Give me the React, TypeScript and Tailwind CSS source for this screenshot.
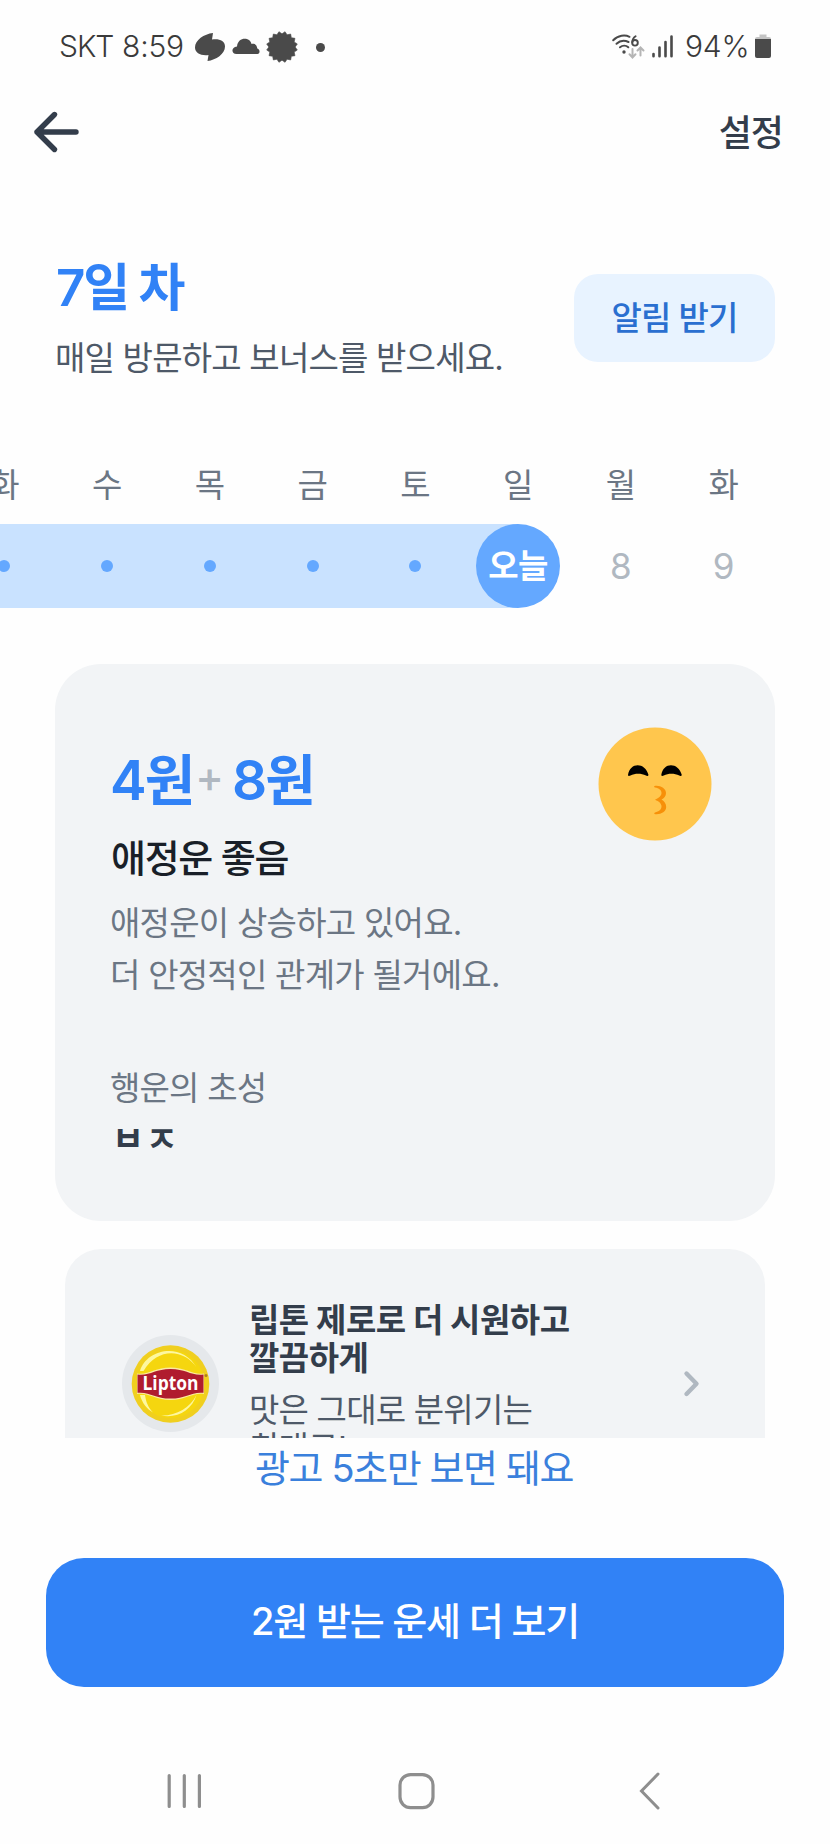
import clsx from 'clsx';

interface Day {
  label: string;
  date: number;
}

const TODAY = 7;

const days: Day[] = [
  { label: '화', date: 2 },
  { label: '수', date: 3 },
  { label: '목', date: 4 },
  { label: '금', date: 5 },
  { label: '토', date: 6 },
  { label: '일', date: 7 },
  { label: '월', date: 8 },
  { label: '화', date: 9 },
];

// 16-pointed burst used by the status bar notification
const burstPoints = Array.from({ length: 32 }, (_, i) => {
  const r = i % 2 === 0 ? 15.6 : 13.2;
  const a = ((i + 1) * Math.PI) / 16;
  return `${(16 + r * Math.cos(a)).toFixed(2)},${(16 + r * Math.sin(a)).toFixed(2)}`;
}).join(' ');

function StatusBar() {
  return (
    <div className="flex h-[94px] items-center justify-between pl-[59px] pr-[59px] text-[30px] font-light text-[#3a3a3a]">
      <div className="flex items-center">
        <span className="w-[63px] pb-0.5 tracking-[-1px]">SKT</span>
        <span className="w-[72px] pb-0.5 tracking-[-0.2px]">8:59</span>
        <svg className="h-8 w-8" viewBox="0 0 32 32" fill="#4a4a4a">
          <path d="M19 2 C10 3 1 9 1 16.5 C1 22 7 25 14.5 24 L13.500 30 C22 29 31 23 31 15.500 C31 9.500 25 7.500 18 8.500 Z" />
        </svg>
        <svg className="ml-[6px] h-8 w-7" viewBox="0 0 28 32" fill="#4a4a4a">
          <path d="M4.500 23 C-1 23 -1 16 5 15.500 C6 5.500 18 6 19.500 13 C23 12.300 25 14.300 25.300 17.500 C28.500 18.500 28 23 25.500 23 Z" />
        </svg>
        <svg className="ml-[6px] h-8 w-8" viewBox="0 0 32 32" fill="#4a4a4a" stroke="#4a4a4a" strokeLinejoin="round">
          <polygon points={burstPoints} strokeWidth="0.6" />
        </svg>
        <span className="ml-[18px] h-[9px] w-[9px] rounded-full bg-[#4a4a4a]" />
      </div>

      <div className="flex items-center">
        <svg className="h-8 w-9" viewBox="0 0 36 32" fill="none" strokeLinecap="round">
          <g stroke="#4a4a4a" strokeWidth="2">
            <path d="M2.200 9.300 C7 4.200 14 3.700 18.500 5.800" />
            <path d="M5.500 12.800 C9 9.500 13.500 9.200 17.500 11" />
            <path d="M9 16.300 C11.500 14.300 15 14.300 17.300 16.300" />
            <circle cx="24" cy="11.800" r="2.800" strokeWidth="1.900" />
            <path d="M21.300 11.500 C21.300 8.500 22.500 6.500 24.600 5.200" strokeWidth="1.900" />
          </g>
          <circle cx="13" cy="21" r="1.700" fill="#4a4a4a" />
          <g stroke="#b5b5b5" strokeWidth="2">
            <path d="M21.500 18 V26 M18.500 23.300 L21.500 26.500 L24.500 23.300" />
            <path d="M29.500 24.500 V17 M26.500 19.500 L29.500 16.500 L32.500 19.500" />
          </g>
        </svg>
        <svg className="ml-1 h-8 w-6" viewBox="0 0 24 32" stroke="#4a4a4a" strokeWidth="2.600" strokeLinecap="round">
          <path d="M2.500 23 V25.200 M8.500 16.500 V25.200 M14.500 11 V25.200 M20.500 5.500 V25.200" />
        </svg>
        <span className="ml-[10px] w-[70px] pb-0.5 tracking-[-0.2px]">94%</span>
        <svg className="h-8 w-4" viewBox="0 0 16 32">
          <path d="M4.500 3.500 H11.500 V6 H14 Q16 6 16 8 H0 Q0 6 2 6 H4.500 Z" fill="#c4c4c4" />
          <path d="M0 8 H16 V25 Q16 27 14 27 H2 Q0 27 0 25 Z" fill="#4a4a4a" />
        </svg>
      </div>
    </div>
  );
}

function WeekStrip() {
  return (
    <div className="mt-[84px] overflow-hidden">
      <div className="-ml-[47px] flex w-[822px]">
        {days.map((day) => (
          <span
            key={day.date}
            className="flex-1 text-center text-[33px] leading-[42px] text-[#6b7684]"
          >
            {day.label}
          </span>
        ))}
      </div>
      <div className="relative mt-[18px] -ml-[47px] flex h-[84px] w-[822px] items-center">
        <div className="absolute inset-y-0 left-0 w-[565px] bg-[#c9e2ff]" />
        {days.map((day) => (
          <div
            key={day.date}
            className={clsx(
              'relative flex flex-1 items-center justify-center',
              day.date > TODAY && 'text-[35px] text-[#b0b8c1]'
            )}
          >
            {day.date < TODAY && <span className="h-3 w-3 rounded-full bg-[#64a8ff]" />}
            {day.date === TODAY && (
              <span className="flex h-[84px] w-[84px] items-center justify-center rounded-full bg-[#64a8ff] pt-0.5 text-[33px] font-bold tracking-[-0.6px] text-white">
                오늘
              </span>
            )}
            {day.date > TODAY && day.date}
          </div>
        ))}
      </div>
    </div>
  );
}

function KissingFace() {
  return (
    <svg className="mt-[-21px] h-[114px] w-[114px]" viewBox="0 0 114 114">
      <circle cx="57" cy="57" r="56.500" fill="#ffc64d" />
      <path d="M30 48 C32 35 47 35 50.500 48 C50 49.500 48.500 49 48 48.500 C43 46 37 46 32.500 48.500 C31 49.300 30 49 30 48 Z" fill="#000" />
      <path d="M63.300 48 C65.300 35 80.300 35 83.800 48 C83.300 49.500 81.800 49 81.300 48.500 C76.300 46 70.300 46 65.800 48.500 C64.300 49.300 63.300 49 63.300 48 Z" fill="#000" />
      <path d="M56.500 59 C62 58 68 61.500 68 66 C68 69.500 66 71.200 63.500 72.500 C66 74 68.200 76.500 68.200 80 C68.200 85 62 88 56.500 87 C56 86 56.500 85.500 57 85.400 C61 84.500 63.500 82.500 63.500 79.500 C63.500 76.500 61 74.500 57 72.800 C61 70.500 63.500 69 63.500 66 C63.500 63 61 61.500 57 60.600 C56 60.300 56 59.300 56.500 59 Z" fill="#f79009" />
    </svg>
  );
}

function FortuneCard() {
  return (
    <section className="mx-[55px] mt-14 flex h-[557px] justify-between rounded-[46px] bg-[#f2f4f6] pt-[86px] pr-[63px] pl-[55px]">
      <div>
        <p className="flex text-[55px] leading-[60px] font-semibold tracking-[-2px] text-[#3182f6]">
          4원<span className="-mt-1 ml-0.5 mr-1 text-[43px] font-medium text-[#b0b8c1]">+</span>
          <span className="ml-1.5">8원</span>
        </p>
        <h2 className="mt-[25px] pl-px text-[38px] leading-[46px] font-medium tracking-[-1.3px] text-[#191f28]">
          애정운 좋음
        </h2>
        <p className="mt-4 text-[33px] leading-[52px] tracking-[-0.75px] text-[#6b7684]">
          애정운이 상승하고 있어요.
          <br />더 안정적인 관계가 될거에요.
        </p>
        <p className="mt-[67px] text-[33px] leading-10 tracking-[-0.8px] text-[#6b7684]">행운의 초성</p>
        <p className="mt-[11px] pl-0.5 text-[35px] leading-10 font-bold tracking-[1.5px] text-[#333d4b]">ㅂㅈ</p>
      </div>
      <div className="-mt-0.5">
        <KissingFace />
      </div>
    </section>
  );
}

function LiptonLogo() {
  return (
    <svg className="mt-[86px] h-[97px] w-[97px]" viewBox="0 0 97 97">
      <circle cx="48.500" cy="48.500" r="48.500" fill="#e5e8eb" />
      <circle cx="48.500" cy="49" r="38.800" fill="#f0cf1f" />
      <circle cx="48.500" cy="49" r="34" fill="#f5d60f" />
      <path d="M18 36 C24 14 60 6 75 33 C62 14 36 12 21.500 36 Z" fill="#fdf7a0" />
      <path d="M18 60 C20 68 25 74 31 77.500 C26 72 24 67 23 60 Z M39 80.500 C55 84 70 75 74.500 60 C68 73 54 81 39 80.500 Z" fill="#fdf7a0" />
      <path d="M15 38.500 C27 40 33 32.500 48.500 32.500 C64 32.500 70 40 82 38.500 V59 C70 57.500 64 65 48.500 65 C33 65 27 57.500 15 59 Z" fill="#fbe9a0" />
      <path d="M15.500 39.500 C28 41 33 34 48.500 34 C64 34 69 41 81.500 39.500 V57.800 C69 56.500 64 63.600 48.500 63.600 C33 63.600 28 56.500 15.500 57.800 Z" fill="#b01c2e" />
      <circle cx="84" cy="40.500" r="1.500" fill="#b0801e" />
      <text
        x="48.500"
        y="55"
        textAnchor="middle"
        textLength="56"
        lengthAdjust="spacingAndGlyphs"
        fill="#fff"
        className="font-['Open_Sans',sans-serif] text-[19px] font-bold"
      >
        Lipton
      </text>
    </svg>
  );
}

function AdCard() {
  return (
    <section className="mx-[65px] mt-7 flex h-[189px] overflow-hidden rounded-t-[36px] bg-[#f2f4f6] pl-[57px]">
      <LiptonLogo />
      <div className="ml-[30px] w-[370px] pt-[52px] text-[33px] leading-[38px] tracking-[-0.8px]">
        <h3 className="font-bold tracking-[-0.5px] text-[#333d4b]">
          립톤 제로로 더 시원하고
          <br />
          깔끔하게
        </h3>
        <p className="mt-3.5 text-[#4e5968]">
          맛은 그대로 분위기는
          <br />
          최대로!
        </p>
      </div>
      <svg className="mt-[120px] ml-[62px] h-[30px] w-5" viewBox="0 0 20 30" fill="none">
        <path
          d="M5.500 4.500 L15.500 14.700 L5.500 25"
          stroke="#b0b8c1"
          strokeWidth="4.400"
          strokeLinecap="round"
          strokeLinejoin="round"
        />
      </svg>
    </section>
  );
}

function NavBar() {
  return (
    <nav className="mt-[51px] flex h-[106px] items-center pl-[164px]">
      <svg className="h-10 w-10" viewBox="0 0 40 40" stroke="#8e8e8e" strokeWidth="3.200" strokeLinecap="round">
        <path d="M5.200 4.500 V35.500 M20.300 4.500 V35.500 M35.400 4.500 V35.500" />
      </svg>
      <svg className="ml-[192px] h-10 w-10" viewBox="0 0 40 40" fill="none" stroke="#8e8e8e" strokeWidth="3.200">
        <rect x="4" y="3.600" width="33" height="33" rx="10.500" />
      </svg>
      <svg className="ml-[198px] h-10 w-8" viewBox="0 0 32 40" fill="none" stroke="#8e8e8e" strokeWidth="3" strokeLinecap="round">
        <path d="M24 3 L7.500 20 L24 37" />
      </svg>
    </nav>
  );
}

export default function App() {
  return (
    <div className="h-[1844px] w-[830px] overflow-hidden bg-[#fefefe] font-['Inter','Noto_Sans_CJK_KR',sans-serif]">
      <StatusBar />

      <header className="flex h-[76px] items-center justify-between pr-[47px] pl-[31px]">
        <svg className="h-[46px] w-[50px]" viewBox="0 0 50 46" fill="none">
          <path
            d="M23.500 5.500 L6 23 L23.500 40.500 M6 23 H45"
            stroke="#333d4b"
            strokeWidth="5.400"
            strokeLinecap="round"
            strokeLinejoin="round"
          />
        </svg>
        <button className="pt-0.5 text-[36px] leading-10 font-medium tracking-[-1px] text-[#333d4b]">설정</button>
      </header>

      <div className="mt-[86px] flex items-center justify-between pr-[55px] pl-[55px]">
        <div>
          <h1 className="pt-0.5 pl-px text-[51px] leading-[60px] font-semibold tracking-[-2.2px] text-[#3182f6]">
            7일 차
          </h1>
          <p className="mt-[18px] text-[33px] leading-[44px] tracking-[-0.8px] text-[#4e5968]">
            매일 방문하고 보너스를 받으세요.
          </p>
        </div>
        <button className="h-[88px] w-[201px] rounded-3xl bg-[#e8f3ff] pt-0.5 text-[33px] font-medium tracking-[-0.8px] text-[#2a6fd0]">
          알림 받기
        </button>
      </div>

      <WeekStrip />
      <FortuneCard />
      <AdCard />

      <p className="mt-[10px] pr-0.5 text-center text-[38px] leading-10 tracking-[-1.4px] text-[#3a80dc]">
        광고 5초만 보면 돼요
      </p>
      <button className="mx-[46px] mt-[70px] block h-[129px] w-[738px] rounded-[38px] bg-[#3182f6] pb-0.5 text-[38px] font-medium tracking-[-1.2px] text-white">
        2원 받는 운세 더 보기
      </button>

      <NavBar />
    </div>
  );
}
